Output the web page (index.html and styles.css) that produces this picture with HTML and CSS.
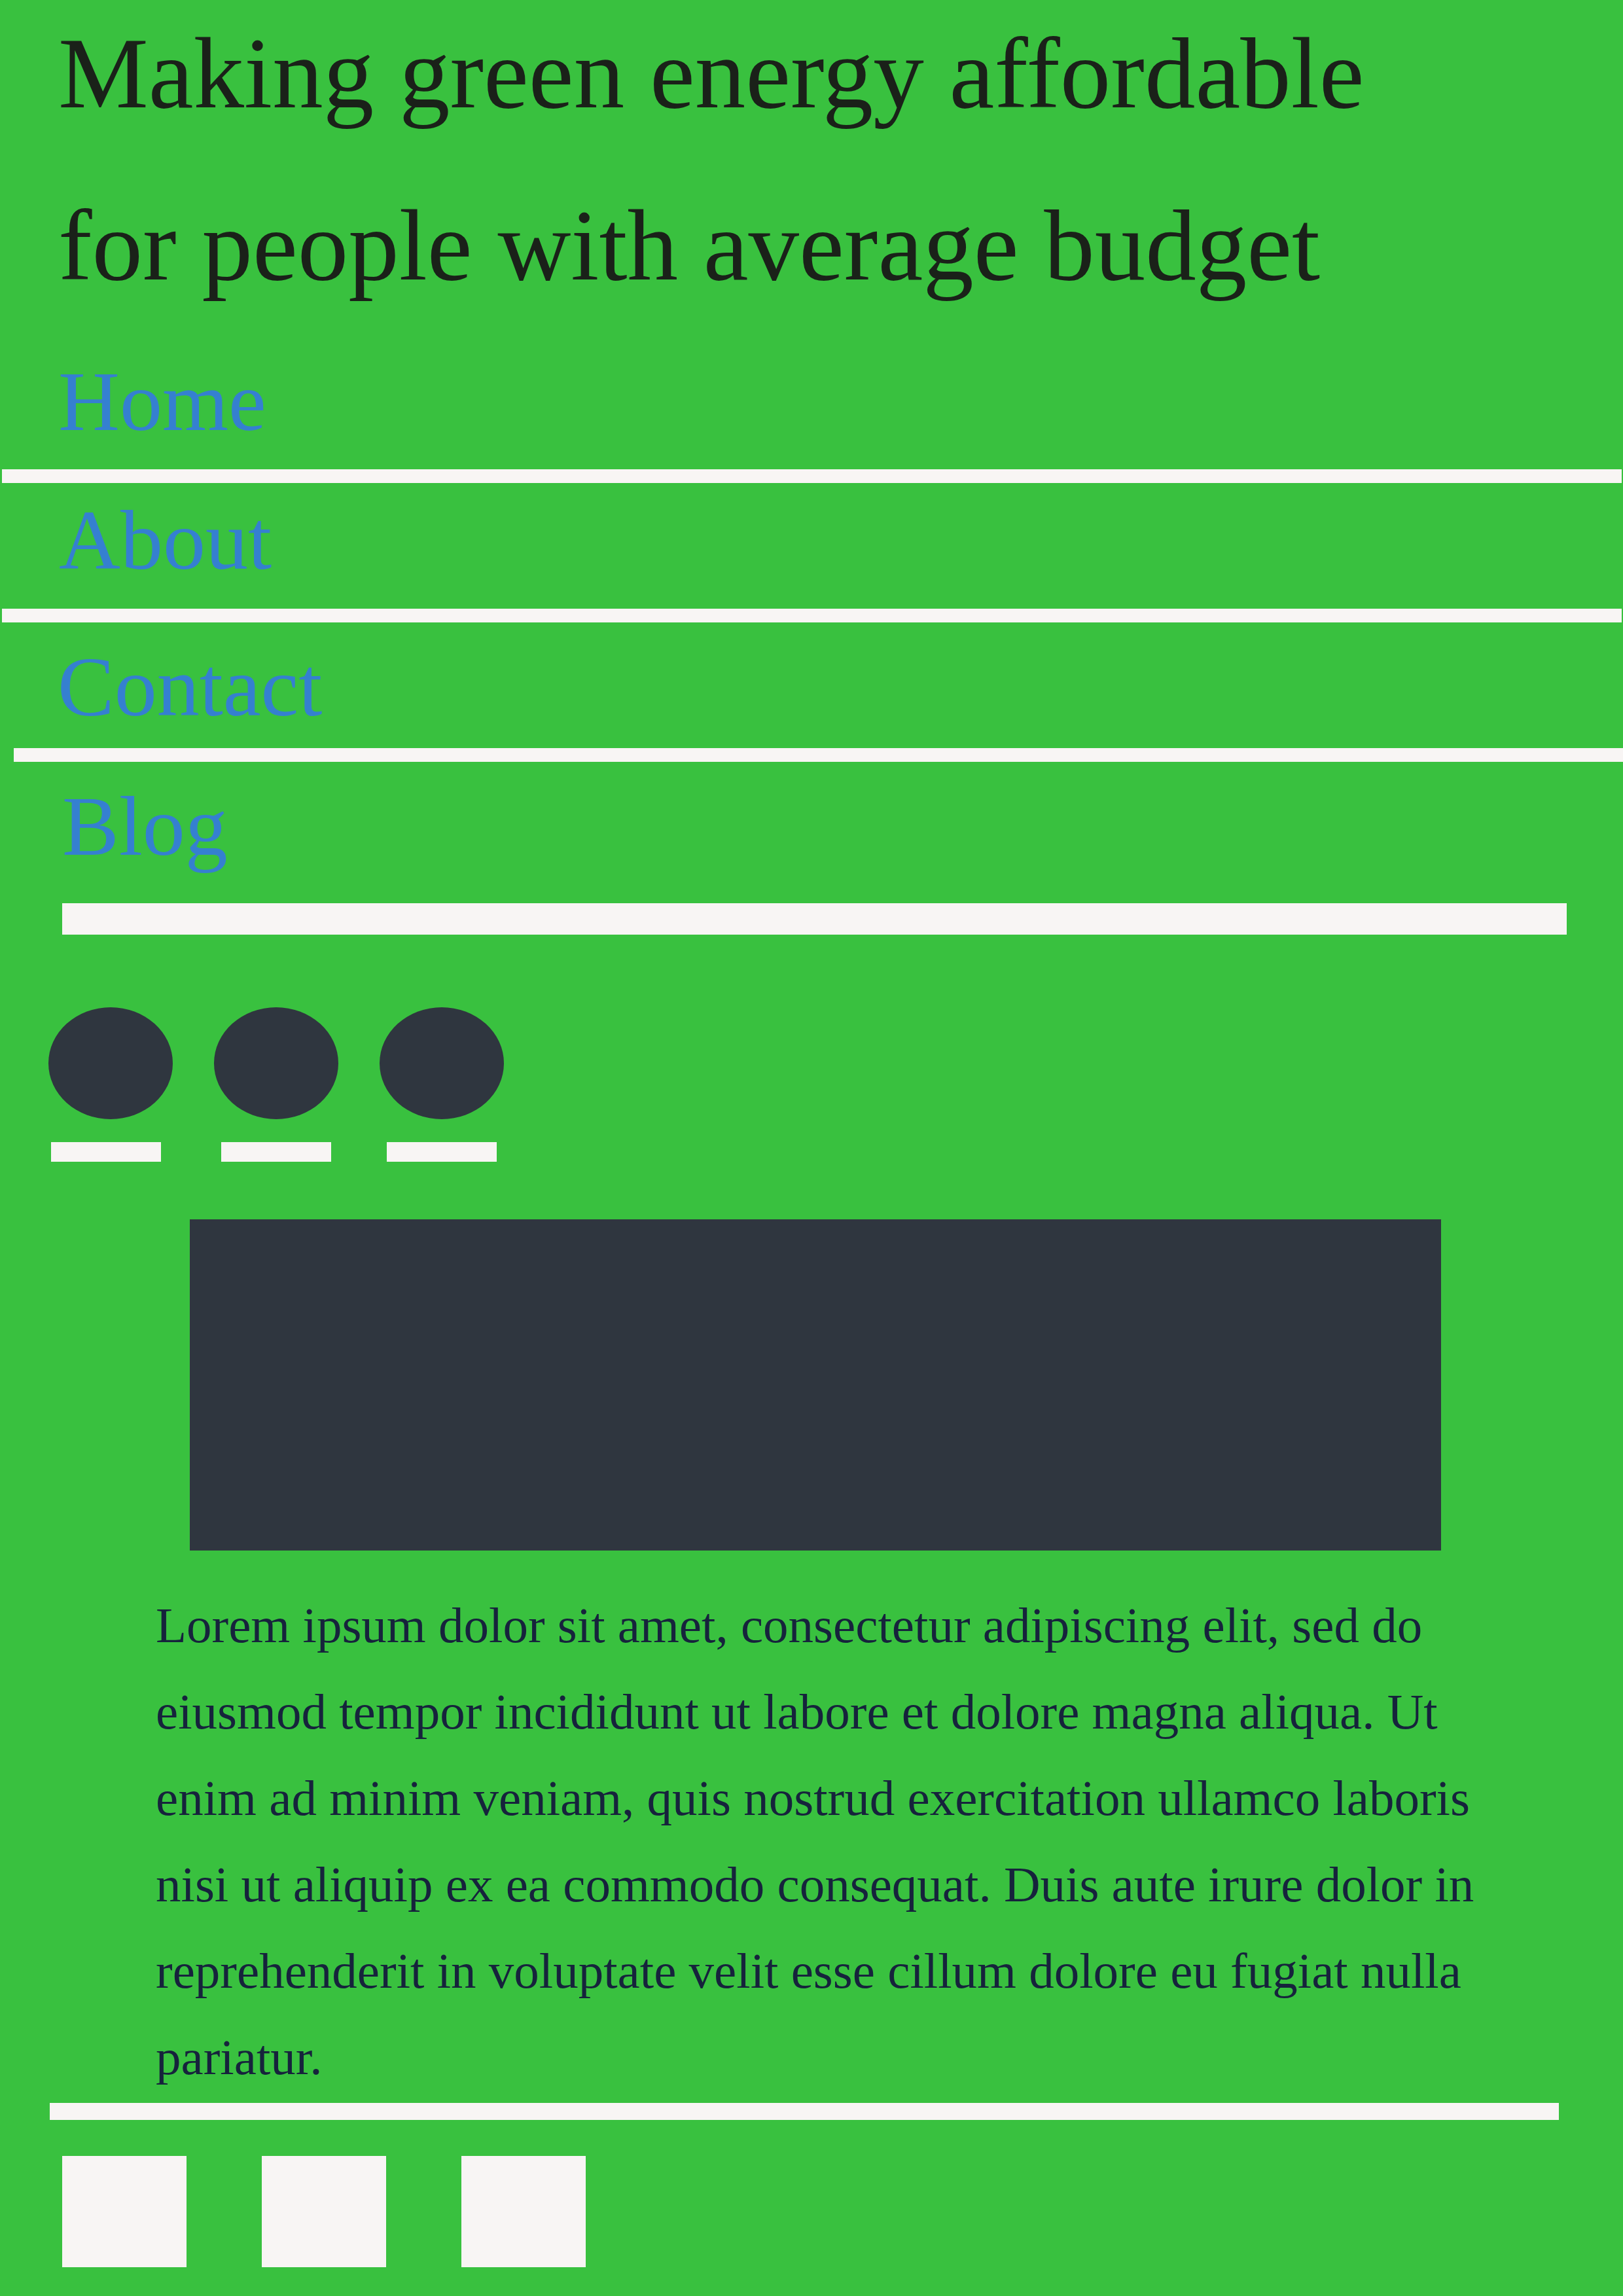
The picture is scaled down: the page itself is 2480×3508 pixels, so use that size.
FILE: index.html
```html
<!DOCTYPE html>
<html lang="en">
<head>
<meta charset="utf-8">
<title>Green energy</title>
<link rel="stylesheet" href="styles.css">
</head>
<body>
<header class="hero">
  <h1 class="title">
    <span class="title-line">Making green energy affordable</span>
    <span class="title-line title-line--second">for people with average budget</span>
  </h1>
</header>
<nav class="nav">
  <ul class="nav-list">
    <li class="nav-item nav-item--home"><a class="nav-link" href="#">Home</a></li>
    <li class="nav-item nav-item--about"><a class="nav-link" href="#">About</a></li>
    <li class="nav-item nav-item--contact"><a class="nav-link" href="#">Contact</a></li>
    <li class="nav-item nav-item--blog"><a class="nav-link" href="#">Blog</a></li>
  </ul>
</nav>
<main class="content">
  <section class="features">
    <div class="feature"><div class="feature-dot"></div><div class="feature-line feature-line--first"></div></div>
    <div class="feature"><div class="feature-dot"></div><div class="feature-line"></div></div>
    <div class="feature"><div class="feature-dot"></div><div class="feature-line"></div></div>
  </section>
  <div class="banner"></div>
  <p class="intro">Lorem ipsum dolor sit amet, consectetur adipiscing elit, sed do eiusmod tempor incididunt ut labore et dolore magna aliqua. Ut enim ad minim veniam, quis nostrud exercitation ullamco laboris nisi ut aliquip ex ea commodo consequat. Duis aute irure dolor in reprehenderit in voluptate velit esse cillum dolore eu fugiat nulla pariatur.</p>
  <div class="divider"></div>
</main>
<footer class="footer">
  <div class="social">
    <div class="social-item"></div>
    <div class="social-item"></div>
    <div class="social-item"></div>
  </div>
</footer>
</body>
</html>
```
FILE: styles.css
```css
html, body {
  margin: 0;
  padding: 0;
}
body {
  background: #39c13f;
  font-family: "Liberation Serif", "Times New Roman", serif;
  min-height: 3508px;
}
.hero {
  padding: 19px 0 0 89px;
}
.title {
  margin: 0;
  font-size: 155px;
  font-weight: 400;
  color: #1a2119;
}
.title-line {
  display: block;
  line-height: 186px;
  white-space: nowrap;
}
.title-line--second {
  margin-top: 77px;
}
.nav-list {
  list-style: none;
  margin: 0;
  padding: 0;
}
.nav-item {
  font-size: 130px;
  line-height: 144px;
  border-bottom: 21px solid #f8f5f4;
}
.nav-link {
  color: #3580d0;
  text-decoration: none;
}
.nav-item--home {
  margin: 73px 2px 0 3px;
  padding: 0 0 32px 86px;
}
.nav-item--about {
  margin: 0 2px 0 3px;
  padding: 15px 0 33px 87px;
}
.nav-item--contact {
  margin: 0 0 0 21px;
  padding: 26px 0 22px 67px;
}
.nav-item--blog {
  margin: 0 86px 0 95px;
  padding: 26px 0 46px 0;
  border-bottom-width: 48px;
}
.features {
  display: flex;
  gap: 63px;
  margin-top: 111px;
  padding-left: 74px;
}
.feature {
  width: 190px;
  display: flex;
  flex-direction: column;
  align-items: center;
}
.feature-dot {
  width: 190px;
  height: 171px;
  border-radius: 50%;
  background: #2f363f;
}
.feature-line {
  width: 168px;
  height: 30px;
  margin-top: 35px;
  background: #f8f5f4;
}
.feature-line--first {
  align-self: flex-start;
  margin-left: 4px;
}
.banner {
  width: 1912px;
  height: 506px;
  margin: 88px 0 0 290px;
  background: #2f363f;
}
.intro {
  width: 2097px;
  margin: 48px 0 0 238px;
  font-size: 77px;
  line-height: 132px;
  color: #16233c;
}
.divider {
  width: 2306px;
  height: 26px;
  margin: 4px 0 0 76px;
  background: #f8f5f4;
}
.social {
  display: flex;
  gap: 115px;
  margin: 55px 0 0 95px;
}
.social-item {
  width: 190px;
  height: 170px;
  background: #f8f5f4;
}
```
